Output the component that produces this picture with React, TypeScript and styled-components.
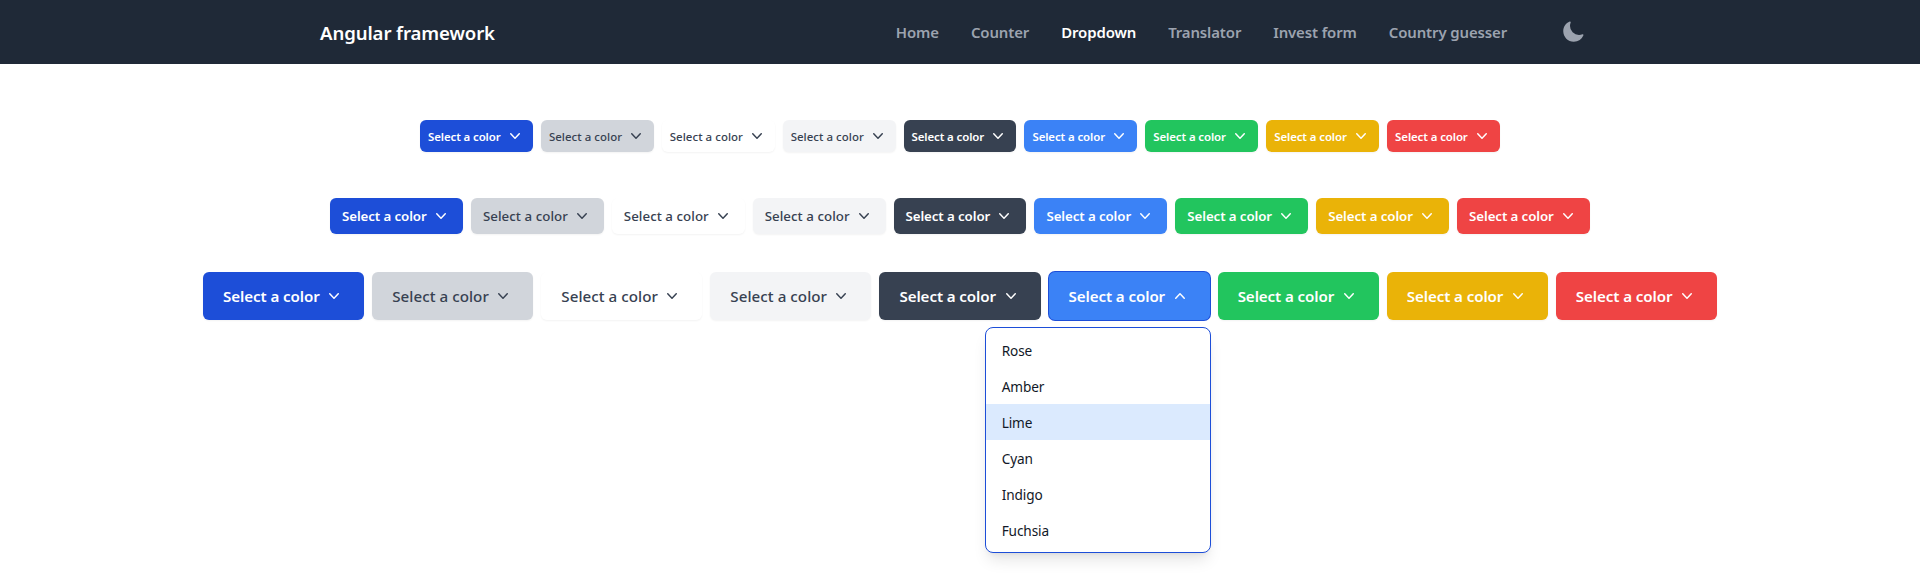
import React from "react";
import styled, { createGlobalStyle } from "styled-components";

type Size = "sm" | "md" | "lg";

interface Tone {
  bg: string;
  fg: string;
  weight: number;
  spacing: number;
}

const solid = (bg: string): Tone => ({ bg, fg: "#ffffff", weight: 600, spacing: -0.1 });
const light = (bg: string): Tone => ({ bg, fg: "#374151", weight: 500, spacing: 0.05 });

const tones: Tone[] = [
  solid("#1d4ed8"),
  light("#d1d5db"),
  light("#ffffff"),
  light("#f3f4f6"),
  solid("#374151"),
  solid("#3b82f6"),
  solid("#22c55e"),
  solid("#eab308"),
  solid("#ef4444"),
];

const sizes = {
  sm: { width: 112.9, height: 32, pad: 8, font: 11.45, top: 56 },
  md: { width: 132.9, height: 36, pad: 12, font: 13.3, top: 46 },
  lg: { width: 161.1, height: 48, pad: 20, font: 15.15, top: 38 },
};

const links = ["Home", "Counter", "Dropdown", "Translator", "Invest form", "Country guesser"];
const options = ["Rose", "Amber", "Lime", "Cyan", "Indigo", "Fuchsia"];

const GlobalStyle = createGlobalStyle`
  html, body {
    margin: 0;
    padding: 0;
    background: #ffffff;
    font-family: "Noto Sans", "Liberation Sans", sans-serif;
  }
`;

const Header = styled.header`
  height: 64px;
  background: #1f2937;
`;

const HeaderInner = styled.div`
  width: 1280px;
  height: 100%;
  margin: 0 auto;
  display: flex;
  align-items: center;
  justify-content: space-between;
`;

const Brand = styled.a`
  font-size: 18.6px;
  font-weight: 600;
  color: #ffffff;
  letter-spacing: -0.1px;
`;

const Nav = styled.nav`
  display: flex;
  align-items: center;
  padding-right: 15px;
`;

const NavLink = styled.a<{ $active?: boolean }>`
  padding: 0 16px;
  font-size: 14.95px;
  font-weight: 600;
  letter-spacing: -0.12px;
  color: ${(p) => (p.$active ? "#ffffff" : "#9ca3af")};
`;

const ThemeToggle = styled.button`
  display: flex;
  width: 24px;
  height: 24px;
  margin-left: 38px;
  padding: 0;
  border: 0;
  background: none;
  color: #9ca3af;
`;

const Main = styled.main`
  display: flex;
  flex-direction: column;
  align-items: center;
  min-height: 520px;
`;

const Row = styled.div<{ $size: Size }>`
  display: flex;
  align-items: center;
  gap: 8px;
  margin-top: ${(p) => sizes[p.$size].top}px;
`;

const Dropdown = styled.div`
  position: relative;
`;

const Trigger = styled.button<{ $size: Size; $tone: Tone; $open?: boolean }>`
  display: flex;
  align-items: center;
  justify-content: space-between;
  box-sizing: border-box;
  width: ${(p) => sizes[p.$size].width}px;
  height: ${(p) => sizes[p.$size].height}px;
  padding: 0 ${(p) => sizes[p.$size].pad}px;
  border: 0;
  border-radius: 6px;
  background: ${(p) => p.$tone.bg};
  color: ${(p) => p.$tone.fg};
  font-family: inherit;
  font-size: ${(p) => sizes[p.$size].font}px;
  font-weight: ${(p) => p.$tone.weight};
  letter-spacing: ${(p) => p.$tone.spacing}px;
  white-space: nowrap;
  box-shadow: ${(p) => (p.$open ? "0 0 0 1px #1d4ed8" : "0 1px 2px 0 rgba(0, 0, 0, 0.05)")};
`;

const ColorMenu = styled.div`
  position: absolute;
  top: 55px;
  right: -1px;
  z-index: 10;
  box-sizing: border-box;
  width: 226px;
  padding: 4px 0;
  background: #ffffff;
  border: 1px solid #1d4ed8;
  border-radius: 8px;
  box-shadow: 0 10px 15px -3px rgba(0, 0, 0, 0.1), 0 4px 6px -4px rgba(0, 0, 0, 0.1);
`;

const ColorOption = styled.div<{ $hover?: boolean }>`
  height: 36px;
  padding: 0 16px;
  display: flex;
  align-items: center;
  font-size: 13.63px;
  letter-spacing: -0.1px;
  color: #111827;
  background: ${(p) => (p.$hover ? "#dbeafe" : "transparent")};
`;

const Chevron = ({ up }: { up?: boolean }) => (
  <svg width="20" height="20" viewBox="0 0 20 20" fill="currentColor" aria-hidden="true">
    <path
      fillRule="evenodd"
      clipRule="evenodd"
      d={
        up
          ? "M14.77 12.79a.75.75 0 01-1.06-.02L10 8.832 6.29 12.77a.75.75 0 11-1.08-1.04l4.25-4.5a.75.75 0 011.08 0l4.25 4.5a.75.75 0 01-.02 1.06z"
          : "M5.23 7.21a.75.75 0 011.06.02L10 11.168l3.71-3.938a.75.75 0 111.08 1.04l-4.25 4.5a.75.75 0 01-1.08 0l-4.25-4.5a.75.75 0 01.02-1.06z"
      }
    />
  </svg>
);

const Moon = () => (
  <svg width="24" height="24" viewBox="0 0 24 24" fill="currentColor" aria-hidden="true">
    <path
      fillRule="evenodd"
      clipRule="evenodd"
      d="M9.528 1.718a.75.75 0 01.162.819A8.97 8.97 0 009 6a9 9 0 009 9 8.97 8.97 0 003.463-.69.75.75 0 01.981.98 10.503 10.503 0 01-9.694 6.46c-5.799 0-10.5-4.701-10.5-10.5 0-4.368 2.667-8.112 6.46-9.694a.75.75 0 01.818.162z"
    />
  </svg>
);

const DropdownRow = ({ size, openIndex }: { size: Size; openIndex?: number }) => (
  <Row $size={size}>
    {tones.map((tone, i) => {
      const open = i === openIndex;
      return (
        <Dropdown key={i}>
          <Trigger $size={size} $tone={tone} $open={open}>
            Select a color
            <Chevron up={open} />
          </Trigger>
          {open ? (
            <ColorMenu>
              {options.map((o) => (
                <ColorOption key={o} $hover={o === "Lime"}>
                  {o}
                </ColorOption>
              ))}
            </ColorMenu>
          ) : null}
        </Dropdown>
      );
    })}
  </Row>
);

export default function App() {
  return (
    <>
      <GlobalStyle />
      <Header>
        <HeaderInner>
          <Brand>Angular framework</Brand>
          <Nav>
            {links.map((l) => (
              <NavLink key={l} $active={l === "Dropdown"}>
                {l}
              </NavLink>
            ))}
            <ThemeToggle>
              <Moon />
            </ThemeToggle>
          </Nav>
        </HeaderInner>
      </Header>
      <Main>
        <DropdownRow size="sm" />
        <DropdownRow size="md" />
        <DropdownRow size="lg" openIndex={5} />
      </Main>
    </>
  );
}
